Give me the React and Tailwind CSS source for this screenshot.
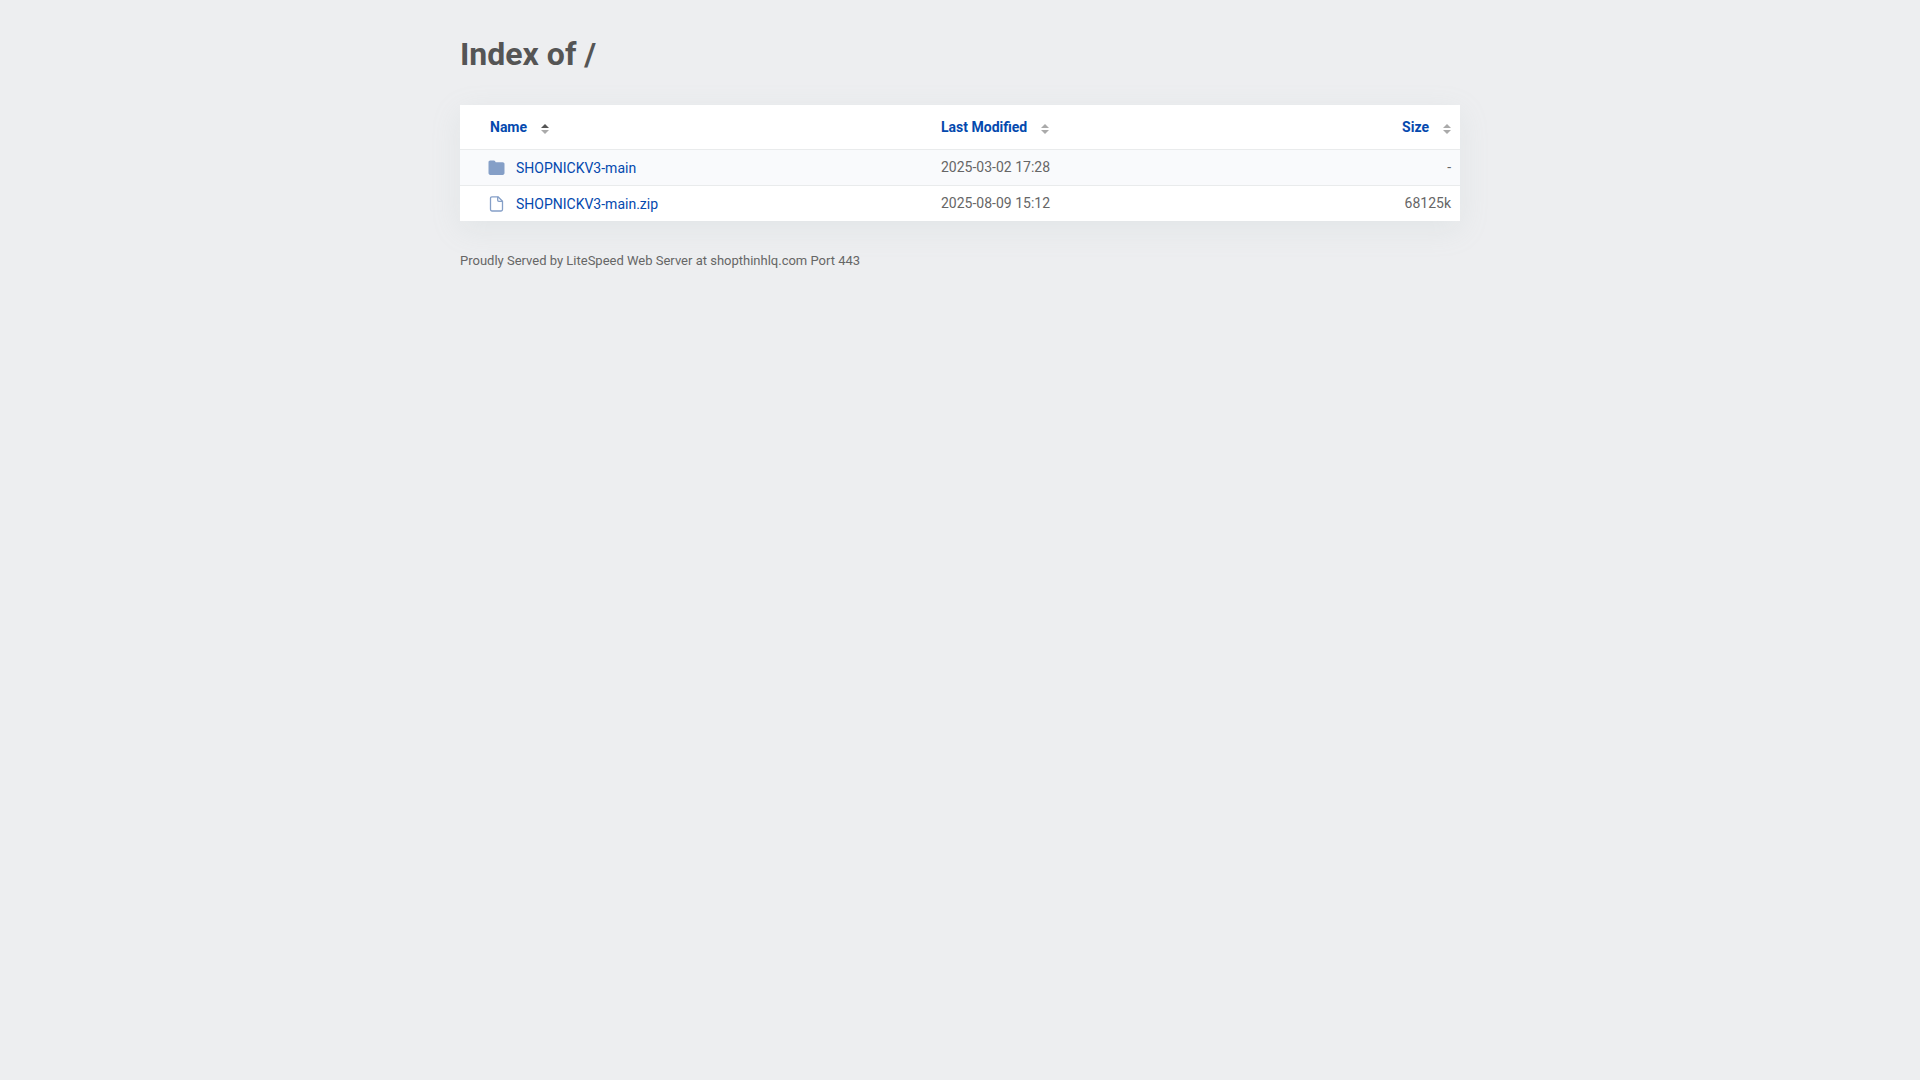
import React from 'react';

const files = [
  { name: 'SHOPNICKV3-main', modified: '2025-03-02 17:28', size: '-', folder: true },
  { name: 'SHOPNICKV3-main.zip', modified: '2025-08-09 15:12', size: '68125k', folder: false },
];

function FolderIcon() {
  return (
    <svg className="w-[17px] h-4 shrink-0" viewBox="0 0 17 16" fill="#859fc7" aria-hidden="true">
      <path d="M.5 2.400C.5 1.300 1.200.6 2.300.6h3.500c.7 0 1.200.3 1.500.9l.4.8h7c1.100 0 1.800.7 1.800 1.800v9c0 1.100-.7 1.800-1.800 1.800H2.300c-1.100 0-1.800-.7-1.800-1.800z" />
    </svg>
  );
}

function FileIcon() {
  return (
    <svg className="w-[17px] h-4 shrink-0" viewBox="0 0 17 16" fill="none" stroke="#859fc7" strokeWidth="1.300" strokeLinejoin="round" aria-hidden="true">
      <path d="M10 .8H3.900c-.9 0-1.400.5-1.400 1.400v11.400c0 .9.500 1.400 1.400 1.400h9.200c.9 0 1.400-.5 1.400-1.400V5.300z" />
      <path d="M9.700.8v3.500c0 .7.400 1.100 1.100 1.100h3.700" />
    </svg>
  );
}

function SortIcon({ active }) {
  return (
    <svg className="w-2 h-3 shrink-0" viewBox="0 0 8 12" aria-hidden="true">
      <path d="M4 1l4 4H0z" fill={active ? '#555' : '#aaa'} />
      <path d="M4 11L0 7h8z" fill="#aaa" />
    </svg>
  );
}

function SortButton({ label, active }) {
  return (
    <button type="button" className="inline-flex items-center gap-3.5 font-bold text-[#0449ae] cursor-pointer">
      {label}
      <span className="pt-1">
        <SortIcon active={active} />
      </span>
    </button>
  );
}

export default function App() {
  return (
    <div className="min-h-screen bg-[#edeef0] px-5 pt-8 font-[Roboto,sans-serif] text-sm text-[#666]">
      <div className="max-w-[1000px] mx-auto">
        <h1 className="text-[32px] leading-11 font-bold text-[#555] mb-[29px]">Index of /</h1>

        <table className="w-full table-fixed border-collapse bg-white shadow-[0_8px_28px_rgba(159,180,180,0.15)]">
          <thead>
            <tr className="h-11">
              <th scope="col" aria-sort="ascending" className="w-[481px] pl-[30px] text-left">
                <SortButton label="Name" active />
              </th>
              <th scope="col" className="w-[32%] text-left">
                <SortButton label="Last Modified" />
              </th>
              <th scope="col" className="pr-[9px] text-right">
                <SortButton label="Size" />
              </th>
            </tr>
          </thead>
          <tbody>
            {files.map((file) => (
              <tr key={file.name} className="h-9 border-t border-[#e9ebec] odd:bg-[#f9fafc]">
                <td className="pl-7 pt-0.5">
                  <a href="#" className="flex items-center gap-[11px] text-[#0449ae]">
                    {file.folder ? <FolderIcon /> : <FileIcon />}
                    {file.name}
                  </a>
                </td>
                <td>{file.modified}</td>
                <td className="pr-[9px] text-right">{file.size}</td>
              </tr>
            ))}
          </tbody>
        </table>

        <footer className="mt-[30px] text-[13px] leading-5">
          Proudly Served by LiteSpeed Web Server at shopthinhlq.com Port 443
        </footer>
      </div>
    </div>
  );
}
